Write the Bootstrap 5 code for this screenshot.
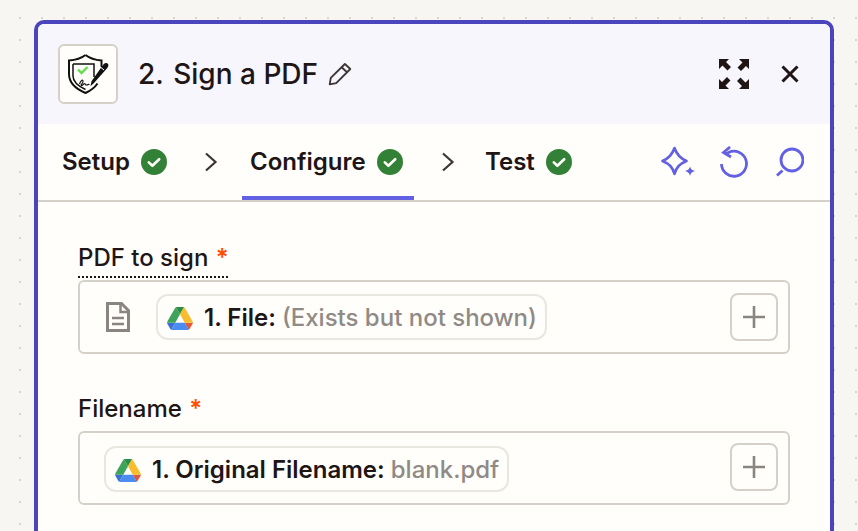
<!DOCTYPE html>
<html lang="en">
<head>
<meta charset="utf-8">
<title>Sign a PDF</title>
<link href="https://cdn.jsdelivr.net/npm/bootstrap@5.3.0/dist/css/bootstrap.min.css" rel="stylesheet">
<style>
html,body{height:100%;overflow:hidden}
body{font-family:Inter,"Liberation Sans",sans-serif;color:#201515;background-color:#f7f6f3;background-image:radial-gradient(circle at 1px 1px,#d9d6cd 1px,transparent 1.2px);background-size:22px 22px;background-position:19px 17px;padding:20px 24px 0 34px}
.panel-shell{border:4px solid #4a45bd;border-bottom:0;border-radius:10px 10px 0 0;background:#fffefb;height:600px;overflow:hidden}
.step-head{height:100px;background:#f7f6fd;padding:0 31px 0 20px}
.logo-box{width:60px;height:60px;border:2px solid #d6d1c8;border-radius:6px;background:#fffefb}
.step-title{font-size:28px;font-weight:500;line-height:32px;margin:0 9px 0 20px;white-space:nowrap}
.step-num{margin-right:2px}
.tab-bar{height:78px;border-bottom:2px solid #d6d1c8;padding:0 26px 0 24px}
.tab-item{font-size:24px;font-weight:600;line-height:30px;height:76px;gap:11px}
.tab-on{margin:0 27px 0 24px;padding:0 11px 0 8px;box-shadow:inset 0 -4px 0 #6360e3;width:172px}
.tab-off-first{width:142px}
.tab-off-last{margin-left:30px}
.tool-search{margin-left:28px}
.form-zone{padding:44px 40px 0}
.field-label{font-size:24px;font-weight:500;line-height:30px;height:30px}
.field-req{color:#ff4f00;margin-left:1px;font-weight:600}
.tip-line{display:block;border-bottom:2px dotted #201515;height:32px;width:150px;white-space:nowrap;line-height:24px}
.field-box{height:74px;border:2px solid #d6d1c8;border-radius:6px;padding:0 10px 0 24px}
.first-box{margin-top:4px;margin-bottom:40px}
.second-box{margin-top:7px}
.file-glyph{margin:0 26px 0 2px}
.pill{height:46px;border:2px solid #e9e7df;border-radius:12px;padding:2px 8px 0 9px;gap:11px;font-size:24px;line-height:30px;white-space:nowrap;font-weight:600}
.pill-low{margin-top:2px}
.add-low{margin-bottom:2px}
.pill-muted{color:#8f8a85;font-weight:500}
.add-btn{width:48px;height:48px;border:2px solid #d6d1c8;border-radius:8px;background:#fffefb;padding:0}
</style>
</head>
<body>
<svg width="0" height="0" class="d-block" aria-hidden="true">
  <symbol id="drive" viewBox="0 0 87.3 78">
    <path d="m6.6 66.85 3.85 6.65c.8 1.4 1.95 2.5 3.3 3.3l13.75-23.8h-27.5c0 1.55.4 3.1 1.2 4.5z" fill="#3a6fd8"/>
    <path d="m43.65 25-13.75-23.8c-1.35.8-2.5 1.9-3.3 3.3l-25.4 44a9.06 9.06 0 0 0 -1.2 4.5h27.5z" fill="#3fa45b"/>
    <path d="m73.55 76.8c1.35-.8 2.5-1.9 3.3-3.3l1.6-2.75 7.65-13.25c.8-1.4 1.2-2.95 1.2-4.5h-27.502l5.852 11.5z" fill="#e0593f"/>
    <path d="m43.65 25 13.75-23.8c-1.35-.8-2.9-1.2-4.5-1.2h-18.5c-1.6 0-3.15.45-4.5 1.2z" fill="#2f8c45"/>
    <path d="m59.8 53h-32.3l-13.75 23.8c1.35.8 2.9 1.2 4.5 1.2h50.8c1.6 0 3.15-.45 4.5-1.2z" fill="#4a8cf0"/>
    <path d="m73.4 26.5-12.7-22c-.8-1.4-1.95-2.5-3.3-3.3l-13.75 23.8 16.15 28h27.45c0-1.55-.4-3.1-1.2-4.5z" fill="#f7bd2e"/>
  </symbol>
  <symbol id="done" viewBox="0 0 26 26">
    <circle cx="13" cy="13" r="13" fill="#338037"/>
    <path d="M7.8 13.4l3.6 3.4 6.8-6.6" fill="none" stroke="#fffefb" stroke-width="2.6" stroke-linecap="round" stroke-linejoin="round"/>
  </symbol>
  <symbol id="chev" viewBox="0 0 14 20">
    <path d="M2 1.5L11.5 10 2 18.5" fill="none" stroke="#3d3534" stroke-width="2.2"/>
  </symbol>
  <symbol id="plus" viewBox="0 0 22 22">
    <path d="M11 0v22M0 11h22" stroke="#8a8580" stroke-width="2.6" fill="none"/>
  </symbol>
</svg>

<div class="panel-shell">
  <div class="step-head d-flex align-items-center">
    <div class="logo-box d-flex align-items-center justify-content-center flex-shrink-0">
      <svg width="44" height="44" viewBox="0 0 44 44">
        <path d="M19.5 3C15 6.500 10 8 3 8.500V22c0 9 7 15 16.500 19 5-2.300 9-5 12-9.500M35.500 15V8.500C29 8 24 6.500 19.500 3" fill="none" stroke="#111" stroke-width="2"/>
        <path d="M7 12h21v13M7 12V24c0 6 5 10 12.500 13.500" fill="none" stroke="#111" stroke-width="1.500"/>
        <path d="M12 17.500l3.500 3.500 6-6" fill="none" stroke="#5fe04a" stroke-width="2.400"/>
        <path d="M13.500 32c1-3 3-5 3.500-3s-3 4-1.500 4.500 2-2 3-2 .5 1.500 2 1.500 1.500-1 3-.5" fill="none" stroke="#111" stroke-width="1.200"/>
        <path d="M28 31l-3.500 3.200 1-5L37 13c1-1.500 3-2.500 4.500-1.500s1 3-.2 4.500z" fill="#111"/>
        <path d="M33 14l5 4" stroke="#fffefb" stroke-width="1"/>
      </svg>
    </div>
    <h1 class="step-title"><span class="step-num">2.</span> Sign a PDF</h1>
    <svg width="26" height="26" viewBox="0 0 24 24"><path d="M2.500 21.500l1-6L16.500 2.800l5 4.600L8.500 20.500zM13.500 5.800l5 4.600" fill="none" stroke="#3d3534" stroke-width="1.700" stroke-linejoin="round"/></svg>
    <div class="ms-auto d-flex align-items-center gap-4">
      <svg width="30" height="30" viewBox="0 0 30 30" class="me-2"><path d="M0 0h10l-3 3 5 5-3.500 3.500-5-5-3.500 3.500zM30 0v10l-3-3-5 5-3.500-3.500 5-5L20 0zM0 30V20l3 3 5-5 3.500 3.500-5 5L10 30zM30 30H20l3-3-5-5 3.500-3.500 5 5L30 20z" fill="#201515"/></svg>
      <svg width="18" height="18" viewBox="0 0 18 18"><path d="M1.500 1.500l15 15M16.500 1.500l-15 15" stroke="#201515" stroke-width="3"/></svg>
    </div>
  </div>

  <div class="tab-bar d-flex align-items-center">
    <div class="tab-item tab-off-first d-flex align-items-center flex-shrink-0"><span>Setup</span><svg width="26" height="26"><use href="#done"/></svg></div>
    <svg width="14" height="20" class="flex-shrink-0"><use href="#chev"/></svg>
    <div class="tab-item tab-on d-flex align-items-center flex-shrink-0"><span>Configure</span><svg width="26" height="26"><use href="#done"/></svg></div>
    <svg width="14" height="20" class="flex-shrink-0"><use href="#chev"/></svg>
    <div class="tab-item tab-off-last d-flex align-items-center flex-shrink-0"><span>Test</span><svg width="26" height="26"><use href="#done"/></svg></div>
    <div class="ms-auto d-flex align-items-center">
      <svg width="35" height="32" viewBox="0 0 35 32"><path d="M13.500 2c2 6 5 10 12 13-7 3-10 6-12 13-2-7-5-10-12-13 7-3 10-7 12-13z" fill="none" stroke="#6360e3" stroke-width="2.600" stroke-linejoin="round"/><path d="M29 20.500c.6 2.400 1.900 3.800 5 4.500-3.100.8-4.400 2.100-5 5-.6-2.900-1.900-4.200-5-5 3.100-.7 4.400-2.100 5-4.500z" fill="#6360e3"/></svg>
      <svg width="28" height="32" viewBox="0 0 28 32" class="ms-4"><path d="M1.500 18a12.500 12.500 0 1 0 7-11.500L5 8" fill="none" stroke="#6360e3" stroke-width="2.800"/><path d="M10 1L3.500 6.500 11 11" fill="none" stroke="#6360e3" stroke-width="2.800"/></svg>
      <svg width="28" height="30" viewBox="0 0 28 30" class="tool-search"><circle cx="16" cy="13" r="11" fill="none" stroke="#6360e3" stroke-width="2.800"/><path d="M6.500 23.500L1 28.500" stroke="#6360e3" stroke-width="2.800"/></svg>
    </div>
  </div>

  <div class="form-zone">
    <div class="field-label"><span class="tip-line">PDF to sign <span class="field-req">*</span></span></div>
    <div class="field-box first-box d-flex align-items-center">
      <svg class="file-glyph flex-shrink-0" width="24" height="30" viewBox="0 0 24 30"><path d="M1.500 1.500h14l7 7v20h-21z" fill="none" stroke="#8a8580" stroke-width="3"/><path d="M14.500 1v9h9M6 16h12M6 22h12" fill="none" stroke="#8a8580" stroke-width="2.500"/></svg>
      <div class="pill d-flex align-items-center"><svg width="26" height="23" class="flex-shrink-0"><use href="#drive"/></svg><span>1. File: <span class="pill-muted">(Exists but not shown)</span></span></div>
      <button type="button" class="add-btn btn ms-auto d-flex align-items-center justify-content-center" aria-label="Add"><svg width="22" height="22"><use href="#plus"/></svg></button>
    </div>
    <div class="field-label">Filename <span class="field-req">*</span></div>
    <div class="field-box second-box d-flex align-items-center">
      <div class="pill pill-low d-flex align-items-center"><svg width="26" height="23" class="flex-shrink-0"><use href="#drive"/></svg><span>1. Original Filename: <span class="pill-muted">blank.pdf</span></span></div>
      <button type="button" class="add-btn add-low btn ms-auto d-flex align-items-center justify-content-center" aria-label="Add"><svg width="22" height="22"><use href="#plus"/></svg></button>
    </div>
  </div>
</div>
</body>
</html>
